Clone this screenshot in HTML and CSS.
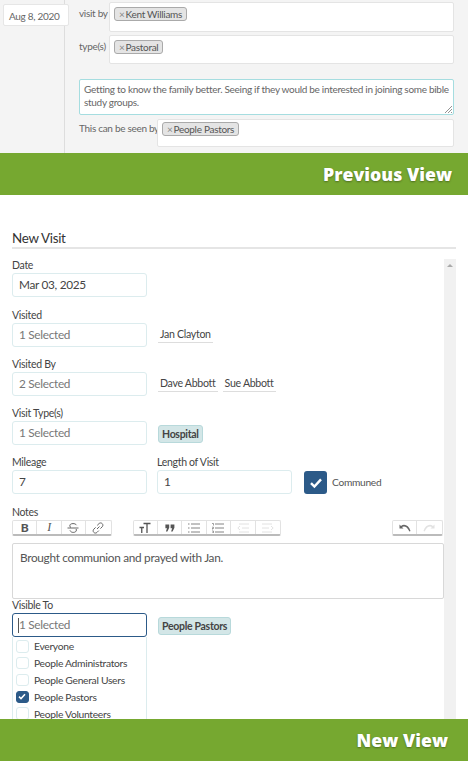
FILE: index.html
```html
<!DOCTYPE html>
<html lang="en">
<head>
    <meta charset="UTF-8">
    <title>Visit Form Comparison</title>
    <link rel="stylesheet" href="styles.css">
</head>
<body>

    <!-- Previous view -->
    <section class="old-view">
        <div class="old-side">
            <div class="old-date">Aug 8, 2020</div>
        </div>
        <div class="old-main">
            <div class="old-row">
                <label class="old-label">visit by</label>
                <div class="old-box"><span class="old-tag"><i>×</i>Kent Williams</span></div>
            </div>
            <div class="old-row">
                <label class="old-label">type(s)</label>
                <div class="old-box old-box-short"><span class="old-tag"><i>×</i>Pastoral</span></div>
            </div>
            <div class="old-notes">
                Getting to know the family better. Seeing if they would be interested in joining some bible study groups.
                <svg class="grip" width="7" height="7" viewBox="0 0 7 7"><path d="M0 7L7 0M3 7L7 3M6 7L7 6" stroke="#777" stroke-width="0.8"/></svg>
            </div>
            <div class="old-row old-row-seen">
                <label class="old-label">This can be seen by</label>
                <div class="old-box"><span class="old-tag"><i>×</i>People Pastors</span></div>
            </div>
        </div>
    </section>

    <div class="banner banner-previous">Previous View</div>

    <!-- New view -->
    <section class="new-view">
        <h2 class="title">New Visit</h2>
        <div class="panel">
            <div class="form">
                <label class="field-label">Date</label>
                <div class="input input-dark">Mar 03, 2025</div>

                <label class="field-label field-label-wide">Visited</label>
                <div class="select-row">
                    <div class="input">1 Selected</div>
                    <span class="person">Jan Clayton</span>
                </div>

                <label class="field-label">Visited By</label>
                <div class="select-row">
                    <div class="input">2 Selected</div>
                    <span class="person">Dave Abbott</span>
                    <span class="person">Sue Abbott</span>
                </div>

                <label class="field-label">Visit Type(s)</label>
                <div class="select-row">
                    <div class="input">1 Selected</div>
                    <span class="chip">Hospital</span>
                </div>

                <div class="mileage-row">
                    <div>
                        <label class="field-label">Mileage</label>
                        <div class="input input-dark">7</div>
                    </div>
                    <div>
                        <label class="field-label">Length of Visit</label>
                        <div class="input input-dark">1</div>
                    </div>
                    <div class="check-big">
                        <svg width="14" height="12" viewBox="0 0 14 12"><path d="M2 6.2L5.4 9.6L12 2.4" fill="none" stroke="#fff" stroke-width="2.4"/></svg>
                    </div>
                    <span class="check-label">Communed</span>
                </div>

                <label class="field-label field-label-wide">Notes</label>
                <div class="toolbar">
                    <div class="tool-group">
                        <span class="tool tool-b">B</span>
                        <span class="tool tool-i">I</span>
                        <span class="tool">
                            <svg width="12" height="12" viewBox="0 0 12 12"><path d="M9.5 3.2C8.8 2 7.6 1.6 6 1.6C4 1.6 2.8 2.4 2.8 3.8C2.8 4.6 3.2 5.2 4 5.6M3 8.4C3.6 9.8 4.8 10.4 6.2 10.4C8.2 10.4 9.4 9.5 9.4 8C9.4 7.6 9.3 7.3 9.1 7" fill="none" stroke="#666" stroke-width="1"/><path d="M0.5 6H11.5" stroke="#666" stroke-width="1"/></svg>
                        </span>
                        <span class="tool">
                            <svg width="12" height="12" viewBox="0 0 12 12"><path d="M5 7L7.5 4.5M5.2 3.4L7 1.6C7.9 0.7 9.3 0.7 10.2 1.6C11.1 2.5 11.1 3.9 10.2 4.8L8.4 6.6M6.8 8.6L5 10.4C4.1 11.3 2.7 11.3 1.8 10.4C0.9 9.5 0.9 8.1 1.8 7.2L3.6 5.4" fill="none" stroke="#666" stroke-width="1"/></svg>
                        </span>
                    </div>
                    <div class="tool-group">
                        <span class="tool">
                            <svg width="12" height="12" viewBox="0 0 12 12"><path d="M4.5 1.5H11.5M8 1.5V11M0.5 5.5H5M2.75 5.5V11" fill="none" stroke="#555" stroke-width="1.3"/></svg>
                        </span>
                        <span class="tool">
                            <svg width="10" height="8" viewBox="0 0 10 8"><path d="M0.4 0.6H4.2V3.8L2.4 7.4H0.9L2 4.2H0.4ZM5.6 0.6H9.4V3.8L7.6 7.4H6.1L7.2 4.2H5.6Z" fill="#555"/></svg>
                        </span>
                        <span class="tool">
                            <svg width="12" height="10" viewBox="0 0 12 10"><path d="M3 1H12M3 5H12M3 9H12M0 1H1.5M0 5H1.5M0 9H1.5" stroke="#777" stroke-width="0.9"/></svg>
                        </span>
                        <span class="tool">
                            <svg width="12" height="10" viewBox="0 0 12 10"><path d="M3 1H12M3 5H12M3 9H12" stroke="#777" stroke-width="0.9"/><path d="M0 0.5H1.5V2.5M0 4.2H1.5V5.5H0V7M0 8H1.5V9.9H0" fill="none" stroke="#777" stroke-width="0.7"/></svg>
                        </span>
                        <span class="tool">
                            <svg width="12" height="10" viewBox="0 0 12 10"><path d="M2 1H12M5 5H12M2 9H12M3 3L0.8 5L3 7" fill="none" stroke="#e2e2e2"/></svg>
                        </span>
                        <span class="tool">
                            <svg width="12" height="10" viewBox="0 0 12 10"><path d="M0 1H10M0 5H7M0 9H10M9 3L11.2 5L9 7" fill="none" stroke="#e2e2e2"/></svg>
                        </span>
                    </div>
                    <div class="tool-group tool-group-history">
                        <span class="tool">
                            <svg width="12" height="8" viewBox="0 0 12 8"><path d="M0.5 0.5V4.5H4.5L3 3C4.8 1.8 8 2 10.4 7.5L11.5 7C9.8 1.4 5.4 -0.6 2 1.9Z" fill="#666"/></svg>
                        </span>
                        <span class="tool">
                            <svg width="12" height="8" viewBox="0 0 12 8"><path d="M11.5 0.5V4.5H7.5L9 3C7.2 1.8 4 2 1.6 7.5L0.5 7C2.2 1.4 6.6 -0.6 10 1.9Z" fill="#e2e2e2"/></svg>
                        </span>
                    </div>
                </div>
                <div class="editor">Brought communion and prayed with Jan.</div>

                <label class="field-label field-label-tight">Visible To</label>
                <div class="select-row select-row-open">
                    <div class="dropdown">
                        <div class="input input-focus"><span class="caret"></span>1 Selected</div>
                        <ul class="options">
                            <li><span class="opt-box"></span>Everyone</li>
                            <li><span class="opt-box"></span>People Administrators</li>
                            <li><span class="opt-box"></span>People General Users</li>
                            <li><span class="opt-box opt-box-on"><svg width="8" height="7" viewBox="0 0 8 7"><path d="M1 3.6L3 5.6L7 1.2" fill="none" stroke="#fff" stroke-width="1.5"/></svg></span>People Pastors</li>
                            <li><span class="opt-box"></span>People Volunteers</li>
                        </ul>
                    </div>
                    <span class="chip chip-visible">People Pastors</span>
                </div>
            </div>
            <div class="scrollbar"><span class="scroll-arrow"></span></div>
        </div>
    </section>

    <div class="banner banner-new">New View</div>

</body>
</html>
```

FILE: styles.css
```css
/* Page */
* {
    box-sizing: border-box;
}

body {
    margin: 0;
    height: 761px;
    overflow: hidden;
    background: #fff;
    font-family: Lato, "Open Sans", sans-serif;
    letter-spacing: -0.3px;
    color: #444;
}

/* Previous view */
.old-view {
    display: flex;
    height: 153px;
    background: #f4f4f4;
    font-size: 10px;
    color: #666;
}

.old-side {
    width: 65px;
    border-right: 1px solid #ddd;
    flex: none;
    padding-top: 4px;
    padding-left: 3px;
}

.old-date {
    width: 66px;
    height: 22px;
    line-height: 22px;
    padding-left: 5px;
    background: #fff;
    border: 1px solid #e6e6e6;
    border-radius: 2px;
}

.old-main {
    width: 389px;
    padding: 2px 0 0 14px;
}

.old-row {
    display: flex;
    gap: 3px;
    margin-bottom: 3px;
}

.old-row-seen {
    margin-top: 4px;
    gap: 2px;
}

.old-label {
    padding-top: 5px;
    white-space: nowrap;
    flex: none;
    width: 27px;
}

.old-row-seen .old-label {
    width: 76px;
    padding-top: 3px;
}

.old-box {
    flex: 1;
    height: 30px;
    padding: 4px;
    background: #fff;
    border: 1px solid #e4e4e4;
    border-radius: 2px;
}

.old-box-short {
    height: 29px;
}

.old-row-seen .old-box {
    height: 28px;
    padding-top: 2px;
}

.old-tag {
    display: inline-block;
    height: 14px;
    line-height: 12px;
    padding: 0 4px;
    background: #e4e4e4;
    border: 1px solid #aaa;
    border-radius: 3px;
    color: #555;
}

.old-tag i {
    font-style: normal;
    color: #888;
    margin-right: 1px;
}

.old-notes {
    position: relative;
    height: 36px;
    margin-top: 15px;
    padding: 3px 4px;
    background: #fff;
    border: 1px solid #a5dde0;
    border-radius: 2px;
    line-height: 12.5px;
}

.grip {
    position: absolute;
    right: 1px;
    bottom: 1px;
}

/* Green banners */
.banner {
    height: 42px;
    background: #76a830;
    color: #fff;
    font-family: "Open Sans", Lato, sans-serif;
    font-weight: 800;
    font-size: 17.7px;
    letter-spacing: 0;
    line-height: 42px;
    text-align: right;
    text-shadow: 0 1px 2px rgba(0, 0, 0, 0.35);
}

.banner-previous {
    padding-right: 16px;
}

.banner-new {
    padding-right: 20px;
}

/* New view */
.new-view {
    height: 524px;
    padding: 28px 12px 0;
    overflow: hidden;
}

.title {
    margin: 0;
    height: 26px;
    font-size: 13.4px;
    font-weight: 400;
    line-height: 18px;
    color: #333;
    padding-top: 6px;
    border-bottom: 2px solid #e5e5e5;
}

.panel {
    display: flex;
    margin-top: 10px;
}

.form {
    width: 432px;
    flex: none;
}

.scrollbar {
    width: 12px;
    height: 460px;
    background: #f1f1f1;
}

.scroll-arrow {
    display: block;
    width: 0;
    margin: 5px auto 0;
    border: 3px solid transparent;
    border-top: 0;
    border-bottom: 3px solid #aaa;
}

.field-label {
    display: block;
    height: 14px;
    margin-top: 11px;
    margin-bottom: 0;
    font-size: 10.5px;
    line-height: 13px;
    color: #444;
}

.form > .field-label:first-child {
    margin-top: 0;
}

.field-label-wide {
    margin-top: 12px;
}

.field-label-tight {
    margin-top: 0;
}

.input {
    width: 135px;
    height: 24px;
    line-height: 22px;
    padding-left: 6px;
    font-size: 11.8px;
    color: #777;
    background: #fff;
    border: 1px solid #dcecee;
    border-radius: 3px;
    flex: none;
}

.input-dark {
    color: #444;
}

.select-row {
    display: flex;
    align-items: center;
    height: 24px;
    gap: 5px;
}

.person {
    font-size: 10.6px;
    line-height: 13px;
    padding: 0 2px 1px;
    border-bottom: 1px solid #ddd;
    color: #444;
}

.select-row .input + .person,
.select-row .input + .chip {
    margin-left: 6px;
}

.chip {
    height: 18px;
    line-height: 17px;
    padding: 0 3px;
    font-size: 10.5px;
    font-weight: 700;
    color: #444;
    background: #d3e6e7;
    border: 1px solid #b8d9db;
    border-radius: 3px;
    margin-top: 2px;
}

.mileage-row {
    display: flex;
    align-items: flex-end;
    margin-top: 11px;
    gap: 10px;
}

.mileage-row .field-label {
    margin-top: 0;
}

.check-big {
    display: flex;
    align-items: center;
    justify-content: center;
    width: 23px;
    height: 23px;
    margin-left: 2px;
    background: #2c5a88;
    border-radius: 3px;
}

.check-label {
    font-size: 10.2px;
    line-height: 23px;
    margin-left: -5px;
    color: #555;
}

/* Editor toolbar */
.toolbar {
    display: flex;
    gap: 21px;
    height: 16px;
    margin-bottom: 7px;
}

.tool-group {
    display: flex;
    border: 1px solid #e2e2e2;
    border-bottom: 2px solid #bbb;
    border-radius: 2px;
}

.tool-group-history {
    margin-left: 90px;
}

.tool {
    display: flex;
    align-items: center;
    justify-content: center;
    width: 24.4px;
    border-right: 1px solid #e2e2e2;
    font-size: 11px;
    color: #555;
}

.tool:last-child {
    border-right: 0;
}

.tool-b {
    font-weight: 900;
    font-size: 12px;
}

.tool-i {
    font-family: "Liberation Serif", serif;
    font-style: italic;
    font-size: 12px;
}

.editor {
    height: 56px;
    padding: 7px;
    font-size: 11.8px;
    line-height: 14px;
    color: #555;
    border: 1px solid #d8d8d8;
    border-radius: 2px;
}

/* Visible To dropdown */
.select-row-open {
    align-items: flex-start;
    height: auto;
}

.input-focus {
    border-color: #2c5a88;
    position: relative;
}

.caret {
    position: absolute;
    left: 5px;
    top: 4px;
    width: 1px;
    height: 15px;
    background: #555;
}

.options {
    list-style: none;
    margin: 0;
    padding: 1px 0 0 3px;
    width: 135px;
    height: 90px;
    border: 1px solid #dcecee;
    border-top: 0;
    font-size: 10.3px;
    color: #444;
}

.options li {
    display: flex;
    align-items: center;
    height: 16.8px;
    gap: 5.5px;
}

.opt-box {
    display: flex;
    align-items: center;
    justify-content: center;
    width: 12.5px;
    height: 12.5px;
    background: #fff;
    border: 1px solid #dcecee;
    border-radius: 3px;
}

.opt-box-on {
    background: #2c5a88;
    border-color: #2c5a88;
}

.chip-visible {
    margin-left: 6px;
    margin-top: 4px;
}
```
